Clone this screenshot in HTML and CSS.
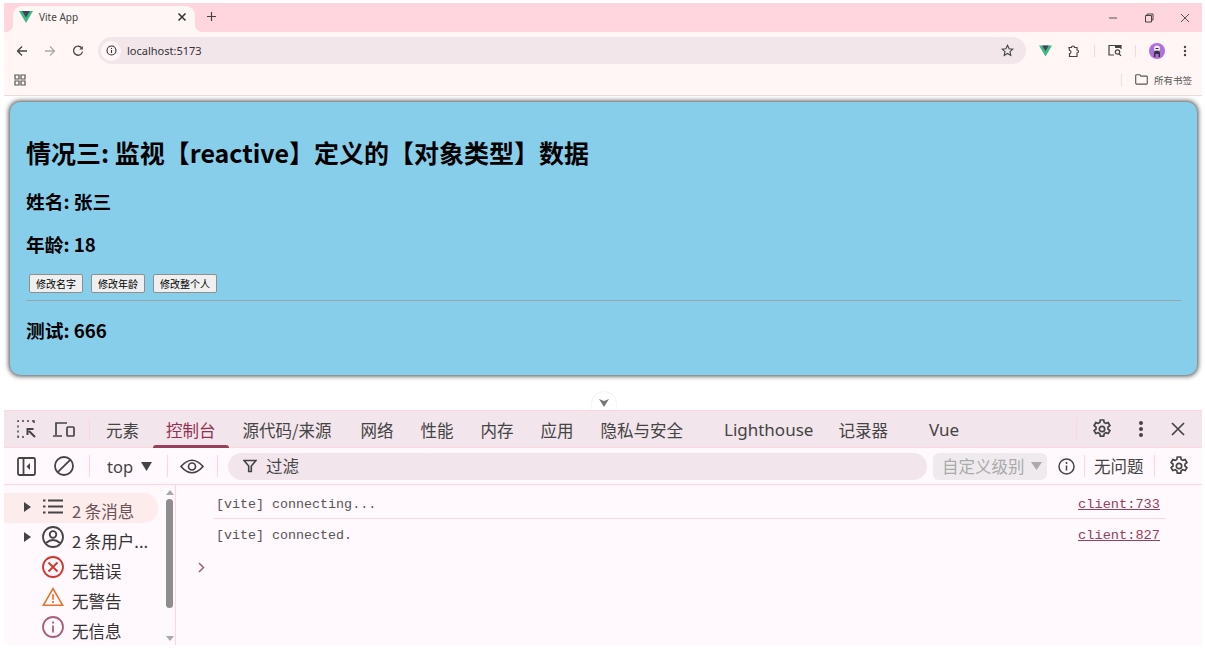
FILE: index.html
```html
<!DOCTYPE html>
<html lang="zh">
<head>
<meta charset="utf-8">
<title>Vite App</title>
<link rel="stylesheet" href="styles.css">
</head>
<body>
<div class="window">
  <div class="tabstrip">
    <div class="tab">
      <svg class="fav" width="14" height="12" viewBox="0 0 14 12"><path d="M0 0h14L7 12z" fill="#41b883"/><path d="M3 0h8L7 6.5z" fill="#35495e"/></svg>
      <span class="tab-title">Vite App</span>
      <svg class="tab-close" width="10" height="10" viewBox="0 0 10 10"><path d="M1.5 1.5l7 7M8.5 1.5l-7 7" stroke="#333" stroke-width="1.5"/></svg>
    </div>
    <svg class="newtab" width="11" height="11" viewBox="0 0 11 11"><path d="M5.5 1v9M1 5.5h9" stroke="#444" stroke-width="1.2"/></svg>
    <div class="winctl">
      <svg width="10" height="10" viewBox="0 0 10 10"><path d="M1 5h8" stroke="#555" stroke-width="1"/></svg>
      <svg width="10" height="10" viewBox="0 0 10 10"><path d="M1.5 2.5h6v6.5h-6zM3 2.5V1h6v6H7.5" fill="none" stroke="#444" stroke-width="1"/></svg>
      <svg width="10" height="10" viewBox="0 0 10 10"><path d="M1 1l8 8M9 1l-8 8" stroke="#555" stroke-width="1"/></svg>
    </div>
  </div>

  <div class="toolbar">
    <svg class="nav" width="12" height="12" viewBox="0 0 12 12"><path d="M11 6H2M6 1.500L1.500 6 6 10.500" fill="none" stroke="#444" stroke-width="1.300"/></svg>
    <svg class="nav" width="12" height="12" viewBox="0 0 12 12"><path d="M1 6h9M6 1.500L10.500 6 6 10.500" fill="none" stroke="#aaa" stroke-width="1.300"/></svg>
    <svg class="nav" width="12" height="12" viewBox="0 0 12 12"><path d="M10 3.500A4.500 4.500 0 1 0 10.500 6.500" fill="none" stroke="#444" stroke-width="1.300"/><path d="M10.800 1v3.500H7.300z" fill="#444"/></svg>
    <div class="omnibox">
      <span class="info-wrap"><svg width="11" height="11" viewBox="0 0 11 11"><circle cx="5.500" cy="5.500" r="4.500" fill="none" stroke="#333" stroke-width="1.100"/><path d="M5.500 5v3M5.500 3v1" stroke="#333" stroke-width="1.100"/></svg></span>
      <span class="url">localhost:5173</span>
      <svg class="star" width="13" height="13" viewBox="0 0 13 13"><path d="M6.500 1.300l1.600 3.500 3.700.4-2.800 2.500.8 3.700-3.300-1.900-3.300 1.900.8-3.700L1.200 5.200l3.700-.4z" fill="none" stroke="#444" stroke-width="1.100"/></svg>
    </div>
    <svg class="ext-vue" width="13" height="12" viewBox="0 0 14 12"><path d="M0 0h14L7 12z" fill="#41b883"/><path d="M3.500 0h7L7 6z" fill="#35495e"/></svg>
    <svg class="ext-puzzle" width="14" height="14" viewBox="0 0 14 14"><path d="M2 3.500h2.500a1.500 1.500 0 0 1 3 0H10V6a1.500 1.500 0 0 1 0 3v3.500H2.500V9.500a1.500 1.500 0 0 0 0-3z" fill="none" stroke="#444" stroke-width="1.200"/></svg>
    <span class="tb-sep"></span>
    <svg class="ext-search" width="14" height="13" viewBox="0 0 14 13"><path d="M6 11H1V1.500h12V5" fill="none" stroke="#444" stroke-width="1.200"/><path d="M7 1.500h6V4H7z" fill="#444"/><circle cx="9.500" cy="8" r="2.200" fill="none" stroke="#444" stroke-width="1.200"/><path d="M11 9.800l2 2" stroke="#444" stroke-width="1.200"/></svg>
    <span class="tb-sep second"></span>
    <span class="avatar"><svg width="10" height="12" viewBox="0 0 10 12"><circle cx="5" cy="3.500" r="3" fill="#eee"/><path d="M2 12V8.500a3 3 0 0 1 6 0V12H6.500V9h-3v3z" fill="#333"/><path d="M3.500 3.500h3" stroke="#333" stroke-width="1"/></svg></span>
    <svg class="kebab" width="4" height="12" viewBox="0 0 4 12"><circle cx="2" cy="2" r="1.200" fill="#444"/><circle cx="2" cy="6" r="1.200" fill="#444"/><circle cx="2" cy="10" r="1.200" fill="#444"/></svg>
  </div>

  <div class="bookmarks">
    <svg width="12" height="12" viewBox="0 0 12 12"><path d="M1 1h4v4H1zM7 1h4v4H7zM1 7h4v4H1zM7 7h4v4H7z" fill="none" stroke="#555" stroke-width="1.200"/></svg>
    <span class="bm-right">
      <span class="bm-sep"></span>
      <svg width="13" height="11" viewBox="0 0 13 11"><path d="M.7 1.500q0-.8.8-.8h3.300l1.200 1.400h5.500q.8 0 .8.8v6.400q0 .8-.8.8H1.500q-.8 0-.8-.8z" fill="none" stroke="#555" stroke-width="1.100"/></svg>
      <span class="bm-label">所有书签</span>
    </span>
  </div>

  <main class="page">
    <section class="person">
      <h2>情况三: 监视【reactive】定义的【对象类型】数据</h2>
      <h3>姓名: 张三</h3>
      <h3>年龄: 18</h3>
      <div class="btns">
        <button>修改名字</button><button>修改年龄</button><button>修改整个人</button>
      </div>
      <hr>
      <h3 class="test">测试: 666</h3>
    </section>
    <span class="drawer-toggle"><svg width="10" height="8" viewBox="0 0 10 8"><path d="M0 0l5 2 5-2-5 8z" fill="#777"/></svg></span>
  </main>

  <div class="dt-tabs">
    <svg class="dt-ico first" width="20" height="19" viewBox="0 0 20 19"><path d="M1 2V1h1M5 1h2M10 1h2M15 1h2V3M1 5.500v2M1 10.500v2M1 15.500V17h1M5 17h2" fill="none" stroke="#444" stroke-width="1.500"/><path d="M18 17l-6-6M10.500 15v-6h6" fill="none" stroke="#444" stroke-width="2"/></svg>
    <svg class="dt-ico second" width="22" height="17" viewBox="0 0 22 17"><path d="M3 14V2h11M0 15h9" fill="none" stroke="#444" stroke-width="1.700"/><rect x="14" y="6" width="7" height="9" rx="1" fill="none" stroke="#444" stroke-width="1.700"/></svg>
    <span class="dt-sep"></span>
    <span class="dt-tab w-a">元素</span>
    <span class="dt-tab active w-b">控制台</span>
    <span class="dt-tab w-c">源代码/来源</span>
    <span class="dt-tab w-d">网络</span>
    <span class="dt-tab w-d">性能</span>
    <span class="dt-tab w-d">内存</span>
    <span class="dt-tab w-e">应用</span>
    <span class="dt-tab w-f">隐私与安全</span>
    <span class="dt-tab w-g">Lighthouse</span>
    <span class="dt-tab w-h">记录器</span>
    <span class="dt-tab w-v">Vue</span>
    <span class="dt-right">
      <span class="dt-sep"></span>
      <svg width="20" height="20" viewBox="0 0 20 20"><path d="M8.300 1h3.400l.5 2.500 1.600.9 2.400-.8 1.700 2.900-1.900 1.700v1.800l1.900 1.700-1.700 2.900-2.400-.8-1.600.9-.5 2.500H8.300l-.5-2.500-1.600-.9-2.400.8-1.700-2.900 1.900-1.700V8.200L2.100 6.500l1.700-2.900 2.400.8 1.600-.9z" fill="none" stroke="#444" stroke-width="1.700"/><circle cx="10" cy="10" r="2.700" fill="none" stroke="#444" stroke-width="1.700"/></svg>
      <svg class="dots" width="6" height="18" viewBox="0 0 6 18"><circle cx="3" cy="3" r="2" fill="#444"/><circle cx="3" cy="9" r="2" fill="#444"/><circle cx="3" cy="15" r="2" fill="#444"/></svg>
      <svg class="x" width="14" height="14" viewBox="0 0 14 14"><path d="M1 1l12 12M13 1L1 13" stroke="#444" stroke-width="1.700"/></svg>
    </span>
  </div>

  <div class="dt-bar">
    <svg class="bar-ico" width="19" height="19" viewBox="0 0 19 19"><rect x="1" y="1" width="17" height="17" rx="1.500" fill="none" stroke="#444" stroke-width="1.800"/><path d="M6.500 1v17" stroke="#444" stroke-width="1.800"/><path d="M13 6v7l-3.500-3.500z" fill="#444"/></svg>
    <svg class="bar-ico block" width="20" height="20" viewBox="0 0 20 20"><circle cx="10" cy="10" r="9" fill="none" stroke="#444" stroke-width="1.800"/><path d="M3.800 16.200L16.200 3.800" stroke="#444" stroke-width="1.800"/></svg>
    <span class="bar-sep s1"></span>
    <span class="ctx">top</span>
    <svg class="caret" width="11" height="9" viewBox="0 0 11 9"><path d="M0 0h11L5.500 9z" fill="#444"/></svg>
    <span class="bar-sep s2"></span>
    <svg class="eye" width="24" height="15" viewBox="0 0 24 15"><path d="M1 7.500Q12-5 23 7.500 12 20 1 7.500z" fill="none" stroke="#444" stroke-width="1.700"/><circle cx="12" cy="7.500" r="3.500" fill="none" stroke="#444" stroke-width="1.700"/></svg>
    <span class="bar-sep s3"></span>
    <div class="filter">
      <svg width="14" height="14" viewBox="0 0 14 14"><path d="M1 1.500h12L8.300 7v5.500H5.700V7z" fill="none" stroke="#444" stroke-width="1.600"/></svg>
      <span>过滤</span>
    </div>
    <div class="levels"><span>自定义级别</span><svg width="11" height="8" viewBox="0 0 11 8"><path d="M0 0h11L5.500 8z" fill="#aaa"/></svg></div>
    <svg class="bar-info" width="17" height="17" viewBox="0 0 17 17"><circle cx="8.500" cy="8.500" r="7.500" fill="none" stroke="#444" stroke-width="1.500"/><path d="M8.500 7.500v5M8.500 4v2" stroke="#444" stroke-width="1.500"/></svg>
    <span class="bar-sep s4"></span>
    <span class="issues">无问题</span>
    <span class="bar-sep s5"></span>
    <svg class="bar-gear" width="20" height="20" viewBox="0 0 20 20"><path d="M8.300 1h3.400l.5 2.500 1.600.9 2.400-.8 1.700 2.900-1.900 1.700v1.800l1.900 1.700-1.700 2.900-2.400-.8-1.600.9-.5 2.500H8.300l-.5-2.500-1.600-.9-2.400.8-1.700-2.900 1.900-1.700V8.200L2.100 6.500l1.700-2.900 2.400.8 1.600-.9z" fill="none" stroke="#444" stroke-width="1.700"/><circle cx="10" cy="10" r="2.700" fill="none" stroke="#444" stroke-width="1.700"/></svg>
  </div>

  <div class="console">
    <aside class="side">
      <ul class="side-list">
        <li class="sel"><svg class="tri" width="7" height="10" viewBox="0 0 7 10"><path d="M0 0l7 5-7 5z" fill="#444"/></svg><svg class="s-ico" width="20" height="15" viewBox="0 0 20 15"><path d="M5 1.500h15M5 7.500h15M5 13.500h15M0 1.500h2.500M0 7.500h2.500M0 13.500h2.500" stroke="#444" stroke-width="2"/></svg><span>2 条消息</span></li>
        <li><svg class="tri" width="7" height="10" viewBox="0 0 7 10"><path d="M0 0l7 5-7 5z" fill="#444"/></svg><svg class="s-ico" width="22" height="22" viewBox="0 0 22 22"><circle cx="11" cy="11" r="10" fill="none" stroke="#444" stroke-width="1.800"/><circle cx="11" cy="8.500" r="3.300" fill="none" stroke="#444" stroke-width="1.800"/><path d="M4 17q7-6 14 0" fill="none" stroke="#444" stroke-width="1.800"/></svg><span>2 条用户...</span></li>
        <li><svg class="s-ico plain" width="22" height="22" viewBox="0 0 22 22"><circle cx="11" cy="11" r="10" fill="none" stroke="#d0342c" stroke-width="1.800"/><path d="M6.500 6.500l9 9M15.500 6.500l-9 9" stroke="#d0342c" stroke-width="1.800"/></svg><span>无错误</span></li>
        <li><svg class="s-ico plain" width="24" height="21" viewBox="0 0 24 21"><path d="M12 2L1.500 20h21z" fill="none" stroke="#e8722c" stroke-width="1.800"/><path d="M12 8v6M12 15.500v2" stroke="#e8722c" stroke-width="1.800"/></svg><span>无警告</span></li>
        <li><svg class="s-ico plain" width="22" height="22" viewBox="0 0 22 22"><circle cx="11" cy="11" r="10" fill="none" stroke="#a8607a" stroke-width="1.800"/><path d="M11 9.500v7M11 5.500v2" stroke="#a8607a" stroke-width="1.800"/></svg><span>无信息</span></li>
      </ul>
      <div class="scroll"><span class="sb-up"></span><span class="sb-thumb"></span><span class="sb-down"></span></div>
    </aside>
    <div class="log">
      <div class="line"><span>[vite] connecting...</span><a>client:733</a></div>
      <div class="line last"><span>[vite] connected.</span><a>client:827</a></div>
      <svg class="prompt" width="7" height="11" viewBox="0 0 7 11"><path d="M1 1l4.500 4.500L1 10" fill="none" stroke="#a8607a" stroke-width="1.500"/></svg>
    </div>
  </div>
</div>
</body>
</html>
```
FILE: styles.css
```css
* { box-sizing: border-box; }
html, body { margin: 0; padding: 0; background: #fff; }
body { width: 1205px; height: 666px; overflow: hidden; font-family: "Noto Sans CJK SC", "Noto Sans", sans-serif; color: #333; }
.window { margin: 3px 3px 0 4px; width: 1198px; height: 642px; display: flex; flex-direction: column; }

.tabstrip { height: 29px; flex: none; background: #ffd6de; display: flex; align-items: flex-end; position: relative; }
.tab { width: 182px; height: 26px; margin-left: 9px; background: #fff6f5; border-radius: 9px 9px 0 0; display: flex; align-items: center; padding: 0 0 4px 6px; font: 10px "Noto Sans", "Liberation Sans", sans-serif; color: #444; position: relative; }
.tab::before, .tab::after { content: ""; position: absolute; bottom: 0; width: 8px; height: 8px; }
.tab::before { left: -8px; background: radial-gradient(circle at 0 0, #ffd6de 8px, #fff6f5 8.500px); }
.tab::after { right: -8px; background: radial-gradient(circle at 100% 0, #ffd6de 8px, #fff6f5 8.500px); }
.tab-title { margin-left: 6px; flex: 1; }
.tab-close { margin-right: 8px; }
.newtab { margin: 0 0 10px 11px; }
.winctl { margin-left: auto; display: flex; align-items: center; gap: 26px; padding: 0 12px 9px 0; }
.winctl svg { display: block; }

.toolbar { height: 33px; flex: none; background: #fff6f5; display: flex; align-items: center; padding: 4px 0 0 12px; }
.nav { margin-right: 16px; flex: none; }
.omnibox { width: 928px; height: 27px; margin-left: -2px; border-radius: 14px; background: #f2e6eb; display: flex; align-items: center; padding-left: 3px; }
.info-wrap { width: 20px; height: 20px; border-radius: 50%; background: #fff6f5; display: flex; align-items: center; justify-content: center; }
.url { margin-left: 6px; font: 11px "Noto Sans", "Liberation Sans", sans-serif; color: #333; flex: 1; }
.star { margin-right: 12px; }
.ext-vue { margin-left: 13px; }
.ext-puzzle { margin-left: 15px; }
.tb-sep { width: 1px; height: 12px; background: #ffd6de; margin-left: 13px; }
.ext-search { margin-left: 13px; }
.tb-sep.second { margin-left: 13px; }
.avatar { width: 16px; height: 16px; margin-left: 13px; border-radius: 50%; background: #b06fdc; display: flex; align-items: center; justify-content: center; }
.kebab { margin-left: 18px; }

.bookmarks { height: 31px; flex: none; background: #fff6f5; border-bottom: 1px solid #e4dede; display: flex; align-items: center; padding: 0 10px 1px 10px; }
.bm-right { margin-left: auto; display: flex; align-items: center; }
.bm-sep { width: 1px; height: 12px; background: #ffd6de; margin-right: 13px; }
.bm-label { font-size: 9.500px; color: #555; margin-left: 6px; }

.page { height: 314px; flex: none; background: #fff; position: relative; padding: 6px 5px 0 6px; }
.person { height: 273px; background: #87ceeb; border-radius: 10px; box-shadow: 0 0 5px 1px #444; padding: 35px 16px 0 16px; color: #000; }
.person h2 { margin: 0; font-size: 25px; line-height: 30px; font-weight: 700; }
.person h3 { margin: 19px 0 0; font-size: 18.720px; line-height: 24px; font-weight: 700; }
.person h2 + h3 { margin-top: 22px; }
.btns { display: flex; gap: 8px; margin: 18px 0 0 3px; }
.btns button { height: 19px; padding: 0 6px; font: 10px "Noto Sans CJK SC", sans-serif; color: #000; background: #efefef; border: 1px solid #8f8f8f; border-radius: 2px; }
.person hr { margin: 7px 0 0; height: 1px; border: 0; background: #9aa6ad; }
.person h3.test { margin-top: 17px; }
.drawer-toggle { position: absolute; left: 588px; bottom: 0; width: 24px; height: 18px; background: #fff; border-radius: 12px 12px 0 0; box-shadow: 0 0 2px #ddd; display: flex; justify-content: center; padding-top: 7px; }

.dt-tabs { height: 38px; flex: none; background: #f2e5eb; border-top: 1px solid #ffd6de; border-bottom: 1px solid #ffd6de; display: flex; align-items: center; padding-left: 13px; font-size: 16.500px; color: #444; }
.dt-ico { flex: none; }
.dt-ico.second { margin-left: 16px; }
.dt-sep { width: 1px; height: 22px; background: #ffd6de; flex: none; }
.dt-tabs > .dt-sep { margin: 0 16px 0 14px; }
.dt-tab { white-space: nowrap; position: relative; line-height: 38px; height: 36px; }
.dt-tab.active { color: #96304f; }
.dt-tab.active::after { content: ""; position: absolute; left: -13px; right: -13px; bottom: -1px; height: 3px; background: #96405c; border-radius: 3px 3px 0 0; }
.w-a { margin-right: 27px; }
.w-b { margin-right: 27px; }
.w-c { margin-right: 29px; }
.w-d { margin-right: 27px; }
.w-e { margin-right: 27px; }
.w-f { margin-right: 41px; }
.w-g { margin-right: 25px; font-family: "Noto Sans", sans-serif; font-size: 17px; }
.w-h { margin-right: 41px; }
.w-v { font-family: "Noto Sans", sans-serif; font-size: 17px; }
.dt-right { margin-left: auto; display: flex; align-items: center; padding-right: 17px; }
.dt-right .dots { margin-left: 26px; }
.dt-right .x { margin-left: 27px; }
.dt-right .dt-sep { margin: 0 15px 0 0; }

.dt-bar { height: 37px; flex: none; background: #fff8fc; border-bottom: 1px solid #ffd6de; display: flex; align-items: center; padding-left: 13px; font-size: 16.500px; color: #444; }
.bar-ico { flex: none; }
.bar-ico.block { margin-left: 18px; }
.bar-sep { width: 1px; height: 22px; background: #ffd6de; flex: none; }
.s1 { margin: 0 17px 0 15px; }
.s2 { margin: 0 12px 0 15px; }
.s3 { margin: 0 10px 0 13px; }
.s4 { margin: 0 9px; }
.s5 { margin: 0 14px 0 10px; }
.ctx { font-family: "Noto Sans", sans-serif; }
.caret { margin-left: 8px; flex: none; }
.eye { flex: none; }
.filter { width: 699px; height: 27px; border-radius: 14px; background: #f2e5eb; display: flex; align-items: center; padding-left: 15px; gap: 9px; flex: none; }
.levels { width: 114px; height: 27px; margin-left: 6px; border-radius: 6px; background: #efeaee; color: #aaa; display: flex; align-items: center; padding-left: 9px; gap: 6px; flex: none; white-space: nowrap; }
.bar-info { margin-left: 11px; flex: none; }
.issues { white-space: nowrap; }
.bar-gear { flex: none; }

.console { flex: 1; background: #fff8fc; display: flex; min-height: 0; overflow: hidden; }
.side { width: 172px; flex: none; border-right: 1px solid #ffd6de; display: flex; }
.side-list { list-style: none; margin: 8px 0 0; padding: 0; width: 154px; flex: none; font-size: 16.500px; color: #333; }
.side-list li { height: 30px; display: flex; align-items: center; white-space: nowrap; border-radius: 0 15px 15px 0; }
.side-list li.sel { background: #fdecec; color: #6a5257; }
.tri { margin-left: 20px; margin-top: -2px; flex: none; }
.s-ico { margin-left: 11px; margin-top: -3px; flex: none; width: 22px; }
.s-ico.plain { margin-left: 38px; }
.side-list span { margin: 6px 0 0 8px; }
.scroll { width: 11px; margin-left: 6px; display: flex; flex-direction: column; align-items: center; padding-top: 5px; height: 160px; }
.sb-up, .sb-down { width: 0; height: 0; border-left: 4px solid transparent; border-right: 4px solid transparent; flex: none; }
.sb-up { border-bottom: 5px solid #aaa; }
.sb-down { border-top: 5px solid #aaa; margin-top: 28px; }
.sb-thumb { width: 7px; height: 109px; margin-top: 4px; background: #8d8d8d; border-radius: 4px; flex: none; }

.log { flex: 1; padding-left: 38px; }
.line { width: 951px; height: 34px; display: flex; justify-content: space-between; align-items: center; padding: 6px 5px 0 2px; border-bottom: 1px solid #ffd6de; font: 13.670px "Liberation Mono", "DejaVu Sans Mono", monospace; color: #555; }
.line span { font-size: 13.350px; }
.line.last { height: 32px; padding-top: 0; border-bottom: 0; }
.line a { color: #96405c; text-decoration: underline; }
.prompt { display: block; margin: 11px 0 0 -16px; }
```
